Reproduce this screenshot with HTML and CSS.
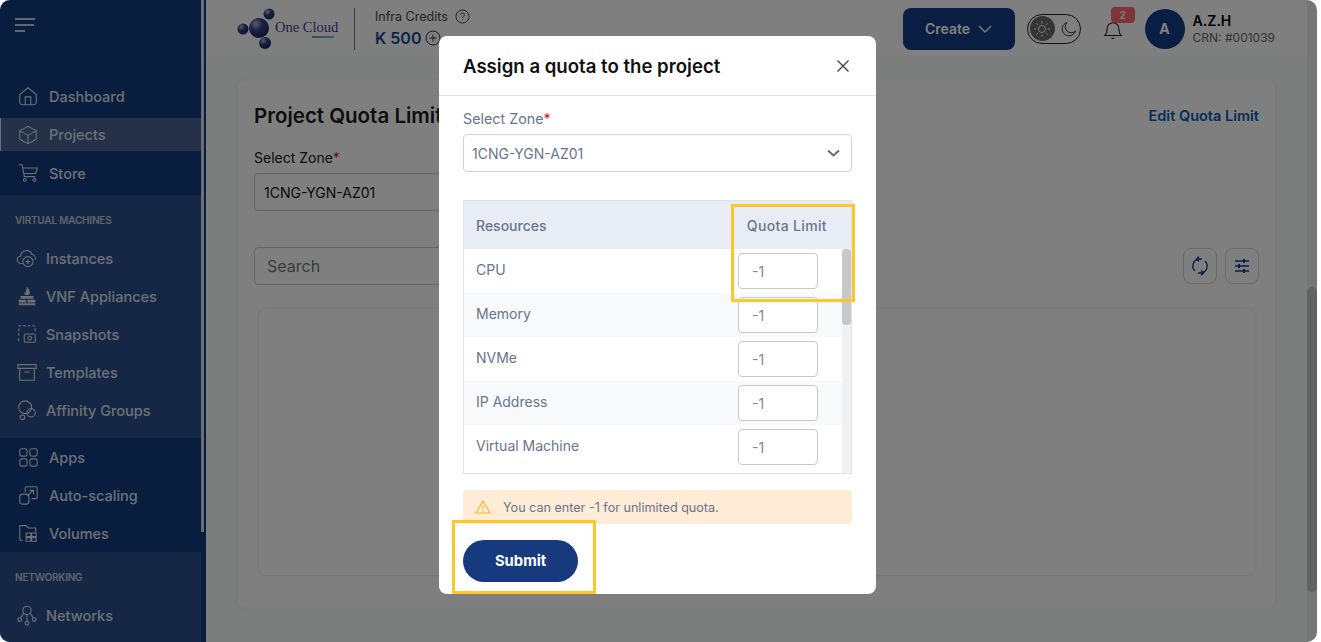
FILE: index.html
```html
<!DOCTYPE html>
<html>
<head>
    <title>One Cloud - Project Quota Limit</title>
    <link rel="stylesheet" href="styles.css">
</head>
<body>
    <div class="app">
        <aside class="sidebar">
            <div class="sidebar-nav">
                <div class="menu-top">
                    <svg class="burger" width="20" height="14" viewBox="0 0 20 14" fill="none" stroke="currentColor" stroke-width="1.6"><path d="M0 1h20M0 7h19M0 13h10"/></svg>
                </div>
                <div class="nav-group first">
                    <a class="nav-item"><svg viewBox="0 0 24 24" class="nav-icon"><path d="M3 10.500 12 3l9 7.500V19a2.500 2.500 0 0 1-2.500 2.500H5.500A2.500 2.500 0 0 1 3 19zM9 21.500V13h6v8.500"/></svg>Dashboard</a>
                    <a class="nav-item active"><svg viewBox="0 0 24 24" class="nav-icon"><path d="M12 2.500 21 7.500v9l-9 5-9-5v-9zM3 7.500l9 5 9-5M12 12.500v9"/></svg>Projects</a>
                    <a class="nav-item"><svg viewBox="0 0 24 24" class="nav-icon"><path d="M2 3h3.500l2.500 13h12M6 6.500h16l-1.500 6H7.200"/><circle cx="8.500" cy="19.500" r="1.500"/><circle cx="19" cy="19.500" r="1.500"/></svg>Store</a>
                </div>
                <div class="nav-group alt">
                    <div class="nav-title">VIRTUAL MACHINES</div>
                    <a class="nav-item"><svg viewBox="0 0 24 24" class="nav-icon"><path d="M7 18H5.500a4 4 0 0 1-.5-8 6.500 6.500 0 0 1 12.500-2 5 5 0 0 1 3.500 6"/><circle cx="13" cy="16" r="5.500"/><path d="M13 13.500v5M10.500 16h5"/></svg>Instances</a>
                    <a class="nav-item"><svg viewBox="0 0 24 24" class="nav-icon filled"><path d="M12 2c1 2 3 3 3 6 0 1.500-.5 2.500-1 3h-4c-.8-.7-1.300-1.700-1-3 .5 1 1 1.200 1.300 1.200C10.500 7 11.500 5 12 2z"/><path d="M5 12h14v3H5zM3 16h8v3H3zM12.500 16H21v3h-8.500zM3 20h18v2H3z"/></svg>VNF Appliances</a>
                    <a class="nav-item"><svg viewBox="0 0 24 24" class="nav-icon"><path stroke-dasharray="3 2" d="M3 14V4.500A1.500 1.500 0 0 1 4.500 3h15A1.500 1.500 0 0 1 21 4.500V11M3 17v3"/><rect x="9" y="12" width="12" height="9" rx="1.500"/><circle cx="15" cy="16.500" r="2"/></svg>Snapshots</a>
                    <a class="nav-item"><svg viewBox="0 0 24 24" class="nav-icon"><path d="M2 4h20v4H2zM4 8v13h16V8M9 12h6"/></svg>Templates</a>
                    <a class="nav-item"><svg viewBox="0 0 24 24" class="nav-icon"><circle cx="10" cy="9" r="7"/><circle cx="16.500" cy="15" r="4.500"/><circle cx="7" cy="20" r="2.500"/></svg>Affinity Groups</a>
                </div>
                <div class="nav-group">
                    <a class="nav-item"><svg viewBox="0 0 24 24" class="nav-icon"><rect x="3" y="3" width="8" height="8" rx="2"/><rect x="14" y="3" width="8" height="8" rx="2"/><rect x="3" y="14" width="8" height="8" rx="2"/><rect x="14" y="14" width="8" height="8" rx="2"/></svg>Apps</a>
                    <a class="nav-item"><svg viewBox="0 0 24 24" class="nav-icon"><path d="M9 9V4.500A1.500 1.500 0 0 1 10.500 3h10A1.500 1.500 0 0 1 22 4.500v10a1.500 1.500 0 0 1-1.500 1.500H16"/><rect x="3" y="11" width="10" height="11" rx="3"/><path d="M11 13l7-6M13.500 7H18v4.500"/></svg>Auto-scaling</a>
                    <a class="nav-item"><svg viewBox="0 0 24 24" class="nav-icon"><path d="M6 20H5a2 2 0 0 1-2-2V4h7l2 2.500h8.500V11"/><path d="M10 12h5v4h-5zM16 12h5v4h-5zM10 17h5v4h-5zM16 17h5v4h-5z"/></svg>Volumes</a>
                </div>
                <div class="nav-group alt last">
                    <div class="nav-title">NETWORKING</div>
                    <a class="nav-item"><svg viewBox="0 0 24 24" class="nav-icon"><circle cx="12" cy="7" r="4.500"/><circle cx="4" cy="17" r="2"/><circle cx="20" cy="17" r="2"/><circle cx="12" cy="21" r="2"/><path d="M8.500 10 5 15.500M15.500 10l3.500 5.500M12 11.500V19"/></svg>Networks</a>
                </div>
            </div>
            <div class="sidebar-track"><div class="sidebar-thumb"></div></div>
        </aside>

        <div class="page">
            <header class="topbar">
                <div class="logo">
                    <svg width="38" height="42" viewBox="0 0 38 42">
                        <defs>
                            <radialGradient id="ball" cx="35%" cy="30%" r="75%"><stop offset="0" stop-color="#b4bbd4"/><stop offset=".45" stop-color="#2f3f86"/><stop offset="1" stop-color="#1a2868"/></radialGradient>
                        </defs>
                        <circle cx="22" cy="20" r="10" fill="url(#ball)"/>
                        <circle cx="32" cy="6" r="5.500" fill="url(#ball)"/>
                        <circle cx="6" cy="21" r="5.500" fill="url(#ball)"/>
                        <circle cx="28" cy="35" r="6" fill="url(#ball)"/>
                    </svg>
                    <div class="logo-text">One Cloud<span class="logo-strip"></span></div>
                </div>
                <div class="credits">
                    <div class="credits-label">Infra Credits
                        <svg width="15" height="15" viewBox="0 0 16 16" fill="none" stroke="currentColor" stroke-width="1"><circle cx="8" cy="8" r="7"/><path d="M6 6.200a2 2 0 1 1 3 1.700c-.7.400-1 .8-1 1.600M8 11.200v.8"/></svg>
                    </div>
                    <div class="credits-value">K 500
                        <svg width="16" height="16" viewBox="0 0 16 16" fill="none" stroke="currentColor" stroke-width="1"><circle cx="8" cy="8" r="7"/><path d="M8 4.500v7M4.500 8h7"/></svg>
                    </div>
                </div>
                <div class="topbar-right">
                    <button class="create-btn">Create
                        <svg width="14" height="8" viewBox="0 0 14 8" fill="none" stroke="currentColor" stroke-width="1.400"><path d="M1 1l6 6 6-6"/></svg>
                    </button>
                    <div class="theme-toggle">
                        <span class="theme-sun"><svg width="16" height="16" viewBox="0 0 16 16" fill="none" stroke="#fff" stroke-width="1"><circle cx="8" cy="8" r="3.500"/><path d="M8 0v2.500M8 13.500V16M0 8h2.500M13.500 8H16M2.300 2.300l1.800 1.800M11.900 11.900l1.800 1.800M2.300 13.700l1.800-1.800M11.900 4.100l1.800-1.800"/></svg></span>
                        <svg width="16" height="16" viewBox="0 0 16 16" fill="none" stroke="#333" stroke-width="1"><path d="M6 1.500a6.800 6.800 0 1 0 8.500 8.500A6 6 0 0 1 6 1.500z"/></svg>
                    </div>
                    <div class="bell">
                        <svg width="20" height="20" viewBox="0 0 20 22" fill="none" stroke="#222" stroke-width="1.200"><path d="M1 17h18c-2-2-2.500-3.500-2.500-7.500a6.500 6.500 0 0 0-13 0C3.500 13.500 3 15 1 17zM8.500 19.500c.5 1.200 2.500 1.200 3 0"/></svg>
                        <span class="badge">2</span>
                    </div>
                    <div class="user">
                        <span class="avatar">A</span>
                        <div>
                            <div class="user-name">A.Z.H</div>
                            <div class="user-crn">CRN: #001039</div>
                        </div>
                    </div>
                </div>
            </header>

            <main class="content">
                <section class="card">
                    <div class="card-head">
                        <h2>Project Quota Limit</h2>
                        <a class="edit-link">Edit Quota Limit</a>
                    </div>
                    <label class="bg-label">Select Zone<span class="req">*</span></label>
                    <div class="bg-select">1CNG-YGN-AZ01</div>
                    <div class="toolbar">
                        <div class="bg-search">Search</div>
                        <button class="tool-btn"><svg width="18" height="20" viewBox="0 0 18 20" fill="none" stroke="currentColor" stroke-width="1.300"><path d="M4 15A7 7 0 0 1 8 3h3M8 .5 5.500 3 8 5.500M14 5a7 7 0 0 1-4 12H7M10 14.500l2.500 2.500-2.500 2.500"/></svg></button>
                        <button class="tool-btn"><svg width="16" height="14" viewBox="0 0 16 14" fill="none" stroke="currentColor" stroke-width="1.300"><path d="M1 2h14M1 7h14M1 12h14"/><path stroke-width="2" d="M10 0v4M5 5v4M10 10v4"/></svg></button>
                    </div>
                    <div class="empty-box"></div>
                </section>
            </main>
        </div>

        <div class="page-scroll"><div class="page-thumb"></div></div>
    </div>

    <div class="backdrop"></div>

    <div class="modal">
        <div class="modal-head">
            <h3>Assign a quota to the project</h3>
            <svg width="14" height="14" viewBox="0 0 14 14" fill="none" stroke="#444" stroke-width="1.400"><path d="M1.500 1.500l11 11M12.500 1.500l-11 11"/></svg>
        </div>
        <div class="modal-body">
            <label class="field-label">Select Zone<span class="req">*</span></label>
            <div class="zone-select">1CNG-YGN-AZ01
                <svg width="13" height="8" viewBox="0 0 13 8" fill="none" stroke="#5f6b80" stroke-width="2"><path d="M1 1.500l5.500 5 5.500-5"/></svg>
            </div>
            <div class="quota-table">
                <div class="quota-head"><span>Resources</span><span class="quota-col">Quota Limit</span></div>
                <div class="quota-scroll">
                    <div class="quota-rows">
                        <div class="quota-row"><span>CPU</span><div class="quota-input">-1</div></div>
                        <div class="quota-row"><span>Memory</span><div class="quota-input">-1</div></div>
                        <div class="quota-row"><span>NVMe</span><div class="quota-input">-1</div></div>
                        <div class="quota-row"><span>IP Address</span><div class="quota-input">-1</div></div>
                        <div class="quota-row"><span>Virtual Machine</span><div class="quota-input">-1</div></div>
                    </div>
                    <div class="quota-track"><div class="quota-thumb"></div></div>
                </div>
            </div>
            <div class="note">
                <svg width="16" height="14" viewBox="0 0 16 14" fill="none" stroke="#f5b731" stroke-width="1.100"><path d="M8 1 15 13H1zM8 5.500v4M8 10.800v.8"/></svg>
                You can enter -1 for unlimited quota.
            </div>
            <button class="submit-btn">Submit</button>
        </div>
        <div class="mark mark-quota"></div>
        <div class="mark mark-submit"></div>
    </div>
</body>
</html>
```

FILE: styles.css
```css
* {
    box-sizing: border-box;
}
body {
    margin: 0;
    height: 642px;
    overflow: hidden;
    background: white;
    font-family: Inter, "Open Sans", sans-serif;
}
button {
    font-family: inherit;
    border: none;
}
.app {
    display: flex;
    width: 1317px;
    height: 642px;
    border-radius: 10px;
    overflow: hidden;
    background: #f9fbfa;
}

/* sidebar */
.sidebar {
    display: flex;
    width: 206px;
    flex: none;
    background: #123a7e;
}
.sidebar-nav {
    width: 201px;
    color: #fff;
}
.sidebar-track {
    width: 5px;
    background: #123a7e;
}
.sidebar-thumb {
    width: 3px;
    height: 532px;
    background: #d8dce4;
}
.menu-top {
    height: 77px;
    padding: 18px 15px;
}
.burger {
    display: block;
    color: #fff;
}
.nav-group.first {
    padding-bottom: 3px;
}
.nav-group.alt {
    background: #2a4e8a;
    padding: 19px 0 9px;
}
.nav-group.alt .nav-item {
    gap: 8px;
    padding-left: 16px;
}
.nav-group.last {
    height: 90px;
}
.nav-title {
    padding-left: 15px;
    margin-bottom: 13px;
    font-size: 10px;
    line-height: 12px;
    font-weight: 600;
    color: #c5cad6;
    letter-spacing: -0.2px;
}
.nav-item {
    display: flex;
    align-items: center;
    gap: 10px;
    height: 38px;
    padding-left: 17px;
    font-size: 14.500px;
    font-weight: 500;
    color: #dce0e8;
}
.nav-item.active {
    height: 33px;
    margin: 3px 0;
    background: #4a6290;
    border-left: 1px solid #d9dde5;
    padding-left: 16px;
}
.nav-icon {
    width: 22px;
    height: 22px;
    flex: none;
    fill: none;
    stroke: #dce0e8;
    stroke-width: 1.200;
}
.nav-icon.filled {
    fill: #dce0e8;
    stroke: none;
}

/* top bar */
.page {
    flex: 1;
    min-width: 0;
    display: flex;
    flex-direction: column;
}
.topbar {
    display: flex;
    align-items: center;
    height: 57px;
    flex: none;
    padding: 0 32px 0 31px;
    background: #fff;
}
.logo {
    display: flex;
    align-items: center;
    width: 118px;
    height: 42px;
    border-right: 1px solid #777;
}
.logo-text {
    font-family: "Liberation Serif", serif;
    font-size: 14.500px;
    color: #3c3f8f;
    margin-top: -3px;
}
.logo-strip {
    display: block;
    width: 22px;
    height: 2px;
    margin: 0 0 -2px 37px;
    opacity: 0.6;
    background: linear-gradient(90deg, #2b3a9b, #2f8f7f);
}
.credits {
    margin-left: 20px;
}
.credits-label {
    display: flex;
    align-items: center;
    gap: 7px;
    font-size: 12.500px;
    color: #444;
}
.credits-value {
    display: flex;
    align-items: center;
    gap: 4px;
    margin-top: 4px;
    font-size: 16px;
    font-weight: 600;
    color: #1f4590;
}
.credits-value svg {
    color: #333;
}
.topbar-right {
    display: flex;
    align-items: center;
    margin-left: auto;
}
.create-btn {
    display: flex;
    align-items: center;
    justify-content: center;
    gap: 8px;
    width: 112px;
    height: 42px;
    border-radius: 8px;
    background: #143c88;
    color: #fff;
    font-size: 14px;
    font-weight: 600;
}
.theme-toggle {
    display: flex;
    align-items: center;
    gap: 6px;
    width: 54px;
    height: 30px;
    margin-left: 12px;
    padding: 0 3px 0 2px;
    border: 1px solid #222;
    border-radius: 15px;
}
.theme-sun {
    display: flex;
    align-items: center;
    justify-content: center;
    width: 25px;
    height: 25px;
    border-radius: 50%;
    background: #6a6a6a;
}
.bell {
    position: relative;
    width: 20px;
    height: 20px;
    margin: 3px 0 0 22px;
}
.bell svg {
    display: block;
}
.badge {
    position: absolute;
    top: -13px;
    left: 8px;
    width: 24px;
    height: 16px;
    border-radius: 4px;
    background: #ff6b70;
    color: #fff;
    font-size: 10px;
    font-weight: 600;
    line-height: 16px;
    text-align: center;
}
.user {
    display: flex;
    align-items: center;
    gap: 8px;
    margin-left: 22px;
}
.avatar {
    display: flex;
    align-items: center;
    justify-content: center;
    width: 40px;
    height: 40px;
    border-radius: 50%;
    background: #143c88;
    color: #fff;
    font-size: 14px;
    font-weight: 700;
}
.user-name {
    font-size: 14px;
    font-weight: 600;
    color: #000;
}
.user-crn {
    margin-top: 1px;
    font-size: 12px;
    color: #666;
}

/* page behind the dialog */
.content {
    flex: 1;
    padding: 23px 32px 34px;
}
.card {
    height: 528px;
    padding: 23px 16px 20px;
    border-radius: 8px;
    background: #fff;
    box-shadow: 0 0 6px rgba(0,0,0,0.05);
}
.card-head {
    display: flex;
    justify-content: space-between;
    align-items: center;
}
.card-head h2 {
    margin: 0;
    font-size: 20.500px;
    font-weight: 600;
    color: #1a1a1a;
}
.edit-link {
    font-size: 14.500px;
    font-weight: 600;
    color: #0d5bb5;
}
.bg-label {
    display: block;
    margin-top: 21px;
    font-size: 14px;
    color: #111;
}
.req {
    color: #e0142c;
}
.bg-select {
    display: flex;
    align-items: center;
    width: 400px;
    height: 38px;
    margin-top: 7px;
    padding-left: 9px;
    border: 1px solid #ccc;
    border-radius: 4px;
    font-size: 14px;
    color: #111;
}
.toolbar {
    display: flex;
    align-items: center;
    gap: 8px;
    margin-top: 36px;
}
.bg-search {
    display: flex;
    align-items: center;
    width: 400px;
    height: 38px;
    margin-right: auto;
    padding-left: 12px;
    border: 1px solid #ccc;
    border-radius: 4px;
    font-size: 16px;
    color: #777;
}
.tool-btn {
    display: flex;
    align-items: center;
    justify-content: center;
    width: 34px;
    height: 36px;
    border: 1px solid #d5d5d5;
    border-radius: 8px;
    background: transparent;
    color: #143c88;
}
.empty-box {
    height: 268px;
    margin: 23px 4px 0;
    border-radius: 8px;
    border: 1px solid #f1f1f1;
    box-shadow: 0 0 5px rgba(0,0,0,0.06);
}
.page-scroll {
    width: 10px;
    flex: none;
    padding-top: 287px;
    background: #ececec;
}
.page-thumb {
    height: 305px;
    border-radius: 5px;
    background: #c4c4c4;
}

/* dialog */
.backdrop {
    position: fixed;
    inset: 0 4px 0 0;
    border-radius: 10px;
    background: rgba(0,0,0,0.5);
}
.modal {
    position: fixed;
    top: 36px;
    left: 439px;
    width: 437px;
    height: 558px;
    border-radius: 8px;
    background: #fff;
}
.modal-head {
    display: flex;
    align-items: center;
    justify-content: space-between;
    height: 60px;
    padding: 0 26px 0 24px;
    border-bottom: 1px solid #e3e3e3;
}
.modal-head h3 {
    margin: 0;
    font-size: 18.600px;
    font-weight: 600;
    color: #111;
}
.modal-body {
    padding: 14px 24px 0;
}
.field-label {
    display: block;
    font-size: 14.300px;
    line-height: 18px;
    color: #69758c;
}
.zone-select {
    display: flex;
    align-items: center;
    justify-content: space-between;
    height: 38px;
    margin-top: 6px;
    padding: 0 11px 0 8px;
    border: 1px solid #ced4da;
    border-radius: 4px;
    font-size: 14px;
    color: #69758c;
}
.quota-table {
    height: 274px;
    margin-top: 28px;
    border: 1px solid #e1e3e6;
}
.quota-head {
    display: flex;
    align-items: center;
    justify-content: space-between;
    height: 48px;
    padding: 0 24px 0 12px;
    background: #e8edf5;
    font-size: 14px;
    font-weight: 500;
    color: #69758c;
}
.quota-col {
    letter-spacing: 0.35px;
}
.quota-scroll {
    display: flex;
    height: 224px;
    overflow: hidden;
}
.quota-rows {
    flex: 1;
    min-width: 0;
}
.quota-row {
    display: flex;
    justify-content: space-between;
    height: 44px;
    padding: 4px 24px 0 12px;
    font-size: 14px;
    color: #69758c;
}
.quota-row span {
    margin-top: 8px;
}
.quota-row:nth-child(even) {
    background: #f8f9fb;
}
.quota-input {
    display: flex;
    align-items: center;
    width: 80px;
    height: 36px;
    padding-left: 13px;
    border: 1px solid #c8c8c8;
    border-radius: 4px;
    background: #fff;
    font-size: 14px;
    color: #7d8799;
}
.quota-track {
    width: 9px;
    background: #f1f1f1;
}
.quota-thumb {
    height: 76px;
    border-radius: 4px;
    background: #c8c8c8;
}
.note {
    display: flex;
    align-items: center;
    gap: 12px;
    height: 34px;
    margin-top: 16px;
    padding-left: 12px;
    border-radius: 4px;
    background: #feecd6;
    font-size: 12.600px;
    color: #69758c;
}
.submit-btn {
    display: block;
    width: 115px;
    height: 42px;
    margin-top: 16px;
    border-radius: 21px;
    background: #173a7e;
    color: #fff;
    font-size: 14.800px;
    font-weight: 700;
}
.mark {
    position: absolute;
    border: 3px solid #fcc62d;
}
.mark-quota {
    top: 168px;
    left: 292px;
    width: 124px;
    height: 98px;
}
.mark-submit {
    top: 484px;
    left: 13px;
    width: 144px;
    height: 74px;
}
```
